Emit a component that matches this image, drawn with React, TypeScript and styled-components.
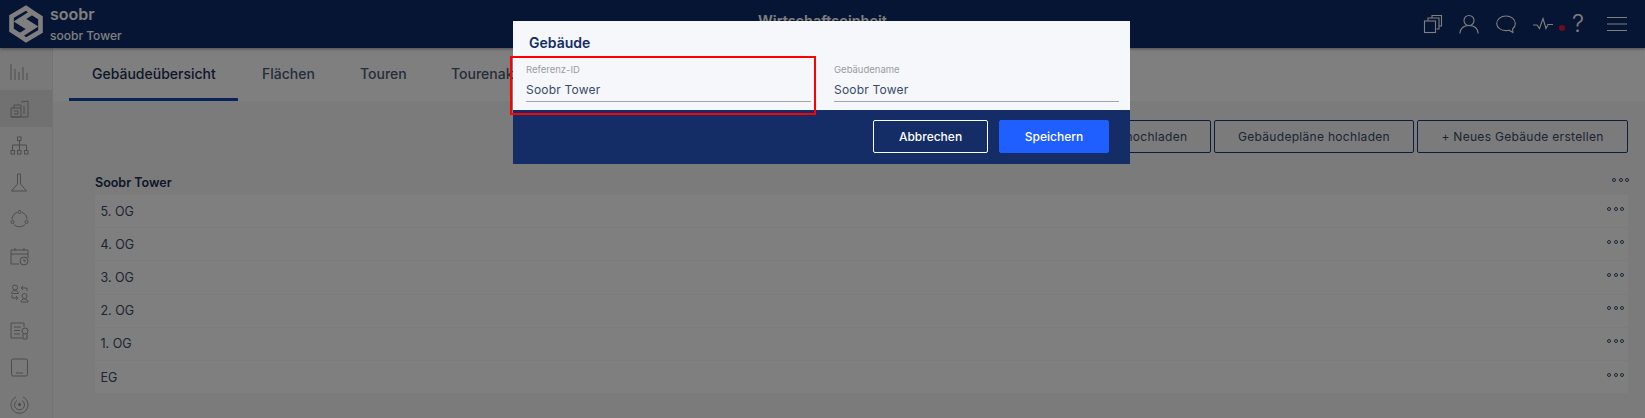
import React from 'react'
import styled, { createGlobalStyle } from 'styled-components'

const floors = ['5. OG', '4. OG', '3. OG', '2. OG', '1. OG', 'EG']

const GlobalStyle = createGlobalStyle`
  html, body {
    margin: 0;
    padding: 0;
    height: 418px;
    overflow: hidden;
    background: #f6f6f6;
    font-family: Inter, "Liberation Sans", sans-serif;
  }
`

const Page = styled.div`
  position: relative;
  width: 1645px;
  height: 418px;
  overflow: hidden;
  display: flex;
  flex-direction: column;
`

const Header = styled.header`
  flex: 0 0 48px;
  display: grid;
  grid-template-columns: 1fr auto 1fr;
  align-items: center;
  background: #0c2b66;
  color: #fff;
  box-shadow: 0 1px 3px rgba(0, 0, 0, 0.4);
  position: relative;
  z-index: 1;
`

const Brand = styled.div`
  display: flex;
  align-items: center;
  gap: 7px;
  padding-left: 9px;
`

const BrandText = styled.div`
  display: flex;
  flex-direction: column;
  gap: 5px;
`

const BrandName = styled.div`
  font-size: 16px;
  line-height: 18px;
  font-weight: 600;
  color: #fff;
`

const BrandSub = styled.div`
  font-size: 12px;
  line-height: 16px;
  font-weight: 500;
  color: #fff;
`

const HeaderTitle = styled.div`
  font-size: 14.5px;
  font-weight: 600;
  line-height: 20px;
  margin-top: -6px;
`

const HeaderIcons = styled.div`
  display: flex;
  justify-content: flex-end;
  align-items: center;
  padding-right: 18px;
  color: #fff;
`

const HeaderIcon = styled.svg<{ $gap?: number }>`
  display: block;
  width: 20px;
  height: 20px;
  margin-left: ${(p) => p.$gap ?? 17}px;
  fill: none;
  stroke: currentColor;
  stroke-width: 1.1;
`

const Dot = styled.span`
  width: 6px;
  height: 6px;
  border-radius: 50%;
  background: #e0193c;
  margin: 7px 0 0 6px;
`

const Help = styled.span`
  font-size: 24px;
  line-height: 24px;
  font-weight: 300;
  width: 12px;
  margin-left: 7px;
  text-align: center;
`

const Body = styled.div`
  flex: 1;
  display: flex;
  min-height: 0;
`

const Sidebar = styled.nav`
  flex: 0 0 53px;
  box-sizing: border-box;
  border-right: 1px solid #e6e6e6;
  background: #f2f2f2;
  display: flex;
  flex-direction: column;
  padding-top: 5px;
`

const SideItem = styled.div<{ $active?: boolean }>`
  flex: 0 0 37px;
  display: flex;
  align-items: center;
  padding-left: 10px;
  background: ${(p) => (p.$active ? '#e2e2e2' : 'transparent')};
  color: #9a9a9a;
`

const SideIcon = styled.svg`
  display: block;
  width: 19px;
  height: 19px;
  fill: none;
  stroke: currentColor;
  stroke-width: 1;
`

const Main = styled.main`
  flex: 1;
  min-width: 0;
  display: flex;
  flex-direction: column;
`

const TabBar = styled.div`
  height: 53px;
  box-sizing: border-box;
  background: #fff;
  display: flex;
  padding-left: 16px;
`

const Tab = styled.div<{ $active?: boolean; $width: number }>`
  box-sizing: border-box;
  flex: 0 0 ${(p) => p.$width}px;
  height: 53px;
  margin-right: ${(p) => (p.$active ? 24 : 0)}px;
  padding: 16px 0 0 ${(p) => (p.$active ? 23 : 0)}px;
  font-size: 14px;
  line-height: 20px;
  font-weight: 500;
  white-space: nowrap;
  color: ${(p) => (p.$active ? '#1c2e52' : '#4c5a76')};
  border-bottom: 3px solid ${(p) => (p.$active ? '#1447ad' : 'transparent')};
`

const Actions = styled.div`
  display: flex;
  justify-content: flex-end;
  gap: 3px;
  padding: 19px 17px 0 0;
`

const OutlineButton = styled.button<{ $width: number }>`
  width: ${(p) => p.$width}px;
  height: 33px;
  box-sizing: border-box;
  background: transparent;
  border: 1px solid #1c3a78;
  border-radius: 2px;
  color: #3a4a6b;
  font: 400 12px Inter, "Liberation Sans", sans-serif;
  letter-spacing: 0.3px;
`

const Content = styled.section`
  padding: 17px 17px 0 42px;
`

const GroupHead = styled.div`
  display: flex;
  justify-content: space-between;
  align-items: center;
  height: 24px;
  margin: 0 -1px 1px 0;
  font-size: 12.5px;
  font-weight: 600;
  color: #1c2e52;
`

const FloorRow = styled.div`
  height: 33.2px;
  box-sizing: border-box;
  display: flex;
  justify-content: space-between;
  align-items: center;
  padding: 0 4px 0 5.5px;
  background: #fff;
  border-bottom: 1px solid #f7f7f7;
  font-size: 12.5px;
  color: #3a4a6b;
`

const MoreDots = styled.span<{ $up?: boolean }>`
  display: flex;
  gap: 2.5px;
  margin-top: ${(p) => (p.$up ? -5 : -5)}px;
`

const MoreDot = styled.i`
  display: block;
  width: 4px;
  height: 4px;
  box-sizing: border-box;
  border: 1px solid #3c4b68;
  border-radius: 50%;
`

const Overlay = styled.div`
  position: absolute;
  inset: 0;
  z-index: 2;
  background: rgba(0, 0, 0, 0.5);
`

const Modal = styled.div`
  position: absolute;
  z-index: 3;
  left: 513px;
  top: 21px;
  width: 617px;
  background: #f5f7fa;
`

const ModalTitle = styled.h2`
  margin: 0;
  padding: 13px 16px 0;
  height: 37px;
  box-sizing: border-box;
  font-size: 14px;
  line-height: 17px;
  font-weight: 600;
  color: #142d66;
`

const Fields = styled.div`
  display: grid;
  grid-template-columns: 285px 285px;
  column-gap: 23px;
  padding: 0 11px 0 13px;
  height: 52px;
`

const Field = styled.div`
  border-bottom: 1px solid #a2a5ab;
  height: 44px;
  box-sizing: border-box;
`

const FieldLabel = styled.div`
  font-size: 9.5px;
  line-height: 12px;
  padding-top: 6px;
  color: #9a9ca3;
`

const FieldValue = styled.div`
  font-size: 12px;
  line-height: 16px;
  margin-top: 6px;
  letter-spacing: 0.2px;
  color: #3a4a6b;
`

const ModalFooter = styled.div`
  height: 54px;
  box-sizing: border-box;
  background: #142d66;
  display: flex;
  justify-content: flex-end;
  gap: 11px;
  padding: 10px 21px 0 0;
`

const ModalButton = styled.button<{ $primary?: boolean }>`
  height: 33px;
  width: ${(p) => (p.$primary ? 110 : 115)}px;
  box-sizing: border-box;
  border-radius: 2px;
  border: 1px solid ${(p) => (p.$primary ? '#1f5eff' : '#ffffff')};
  background: ${(p) => (p.$primary ? '#1f5eff' : 'transparent')};
  color: #fff;
  font: 500 12px Inter, "Liberation Sans", sans-serif;
`

const RedMark = styled.div`
  position: absolute;
  z-index: 4;
  left: 510px;
  top: 56px;
  width: 306px;
  height: 59px;
  box-sizing: border-box;
  border: 2px solid #ff0000;
`

function Logo() {
  return (
    <svg width="34" height="38" viewBox="0 0 34 38" fill="none" stroke="#fff" strokeWidth="4.600">
      <path d="M30 12 17 3 2.500 11.500V25.500l8.500 5L25 21.500 17 16.500l-5 3" />
      <path d="M4 26l13 9 14.500-8.500V12.500L23 7.500 9 16.500l8 5 5-3" />
    </svg>
  )
}

function Dots({ up }: { up?: boolean }) {
  return (
    <MoreDots $up={up}>
      <MoreDot />
      <MoreDot />
      <MoreDot />
    </MoreDots>
  )
}

function Side({ active, children }: { active?: boolean; children: React.ReactNode }) {
  return (
    <SideItem $active={active}>
      <SideIcon viewBox="0 0 19 19">{children}</SideIcon>
    </SideItem>
  )
}

export default function App() {
  return (
    <Page>
      <GlobalStyle />
      <Header>
        <Brand>
          <Logo />
          <BrandText>
            <BrandName>soobr</BrandName>
            <BrandSub>soobr Tower</BrandSub>
          </BrandText>
        </Brand>
        <HeaderTitle>Wirtschaftseinheit</HeaderTitle>
        <HeaderIcons>
          <HeaderIcon viewBox="0 0 20 20">
            <rect x="1.500" y="7" width="11" height="11.500" />
            <path d="M5 6.500V4h11v11h-2.500M9 3.500V1.500h9.500V12H16.500" />
          </HeaderIcon>
          <HeaderIcon viewBox="0 0 20 20" $gap={16}>
            <circle cx="10" cy="6.500" r="5" />
            <path d="M0.800 19.500c.5-5 4-8 9.200-8s8.700 3 9.200 8" />
          </HeaderIcon>
          <HeaderIcon viewBox="0 0 20 20">
            <path d="M10 2c5 0 9.300 3 9.300 7.500 0 2.500-1.200 4.300-2.700 5.500l.3 3.500-3.800-2.300c-1 .3-2 .4-3.100.4-5 0-9.300-3-9.300-7.100C.7 5 5 2 10 2Z" />
          </HeaderIcon>
          <HeaderIcon viewBox="0 0 20 20">
            <path d="M0 11h4l2.500 3.500L10 4.500l3 10 2-4h5" />
          </HeaderIcon>
          <Dot />
          <Help>?</Help>
          <HeaderIcon viewBox="0 0 20 20" $gap={23}>
            <path d="M0 3.500h20M0 10h20M0 16.500h20" />
          </HeaderIcon>
        </HeaderIcons>
      </Header>
      <Body>
        <Sidebar>
          <Side>
            <path d="M1 2v16M5 7v11M9 10v8M13 5v13M17 11v7" />
          </Side>
          <Side active>
            <path d="M1 9h10v9H1ZM4 9V6h7v3M11 3l7-1v16H1M4 12h4v3H4M14 7v8" />
          </Side>
          <Side>
            <rect x="7.500" y="1" width="3.500" height="3.500" />
            <path d="M9.500 4.500V10M2.500 14V9h14v5M9.500 10v4" />
            <rect x="1" y="14.500" width="3.500" height="3.500" />
            <rect x="7.500" y="14.500" width="3.500" height="3.500" />
            <rect x="14.500" y="14.500" width="3.500" height="3.500" />
          </Side>
          <Side>
            <path d="M7.500 1h3v10l6 7H1.500l6-7Z" />
          </Side>
          <Side>
            <path d="M7 2.500C4 3.500 2 6 2 9.500M12 2.500c3 1 5 3.500 5 7M4 14.500c2.500 3 8.500 3 11 0" />
            <circle cx="9.500" cy="2" r="1.500" />
            <circle cx="2.500" cy="12" r="1.500" />
            <circle cx="16.500" cy="12" r="1.500" />
          </Side>
          <Side>
            <path d="M9 17H1V3h17v8M1 7h17M5 1v3M14 1v3" />
            <circle cx="14" cy="14" r="4" />
            <path d="M14 12v2h2" />
          </Side>
          <Side>
            <circle cx="5" cy="3.500" r="2.500" />
            <path d="M1.500 9.500c0-2 1.500-3 3.500-3s3.500 1 3.500 3ZM17 7V4h-6M13 2 11 4l2 2M2 11v3h6M6 12l2 2-2 2" />
            <circle cx="14.500" cy="12" r="2.500" />
            <path d="M11 18c0-2 1.500-3 3.500-3s3.500 1 3.500 3Z" />
          </Side>
          <Side>
            <path d="M12 17H1V2h13v4M4 6h7M4 9.500h6M4 13h6" />
            <circle cx="15" cy="10" r="3" />
            <path d="M13 13v5h4v-5" />
          </Side>
          <Side>
            <rect x="1.500" y="1" width="16" height="17" rx="1.500" />
            <path d="M6 15h7" />
          </Side>
          <Side>
            <path d="M13 2a8.500 8.500 0 1 1-7 0" />
            <path d="M12 5.500a5 5 0 1 1-5 0" />
            <circle cx="9.500" cy="9.500" r="1.200" fill="currentColor" />
          </Side>
        </Sidebar>
        <Main>
          <TabBar>
            <Tab $active $width={169}>
              Gebäudeübersicht
            </Tab>
            <Tab $width={98}>Flächen</Tab>
            <Tab $width={91}>Touren</Tab>
            <Tab $width={120}>Tourenaktivitäten</Tab>
          </TabBar>
          <Actions>
            <OutlineButton $width={200}>Gebäudedaten hochladen</OutlineButton>
            <OutlineButton $width={200}>Gebäudepläne hochladen</OutlineButton>
            <OutlineButton $width={211}>+ Neues Gebäude erstellen</OutlineButton>
          </Actions>
          <Content>
            <GroupHead>
              Soobr Tower
              <Dots up />
            </GroupHead>
            {floors.map((floor) => (
              <FloorRow key={floor}>
                {floor}
                <Dots />
              </FloorRow>
            ))}
          </Content>
        </Main>
      </Body>
      <Overlay />
      <Modal>
        <ModalTitle>Gebäude</ModalTitle>
        <Fields>
          <Field>
            <FieldLabel>Referenz-ID</FieldLabel>
            <FieldValue>Soobr Tower</FieldValue>
          </Field>
          <Field>
            <FieldLabel>Gebäudename</FieldLabel>
            <FieldValue>Soobr Tower</FieldValue>
          </Field>
        </Fields>
        <ModalFooter>
          <ModalButton>Abbrechen</ModalButton>
          <ModalButton $primary>Speichern</ModalButton>
        </ModalFooter>
      </Modal>
      <RedMark />
    </Page>
  )
}
